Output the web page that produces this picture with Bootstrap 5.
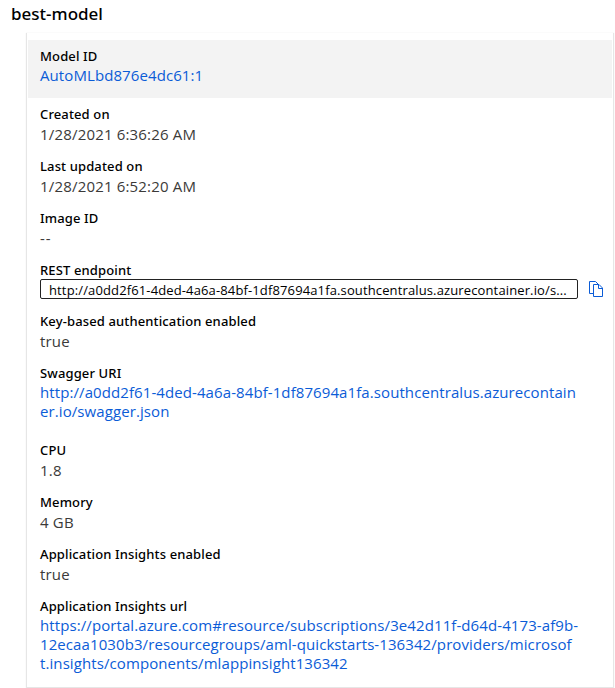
<!DOCTYPE html>
<html lang="en">
<head>
<meta charset="utf-8">
<meta name="viewport" content="width=device-width, initial-scale=1">
<title>best-model</title>
<link href="https://cdn.jsdelivr.net/npm/bootstrap@5.3.0/dist/css/bootstrap.min.css" rel="stylesheet">
<style>
body { font-family: "Open Sans", "Noto Sans", sans-serif; color: #3b3a39; height: 688px; overflow: hidden; }
.page-title { font-family: "Noto Sans", sans-serif; font-size: 17px; line-height: 24px; font-weight: 500; color: #000; padding: 2px 0 0 11px; height: 33px; }
.details { margin: 0 1px 0 26px; height: 655px; padding-top: 7px; border: solid #e6e6e6; border-width: 0 1px 1px; box-shadow: 0 0 1px #e4e4e4; }
.prop { height: 52px; padding: 6px 13px 0; }
.prop dt { font-family: "Noto Sans", sans-serif; font-size: 13px; line-height: 20px; font-weight: 500; letter-spacing: .13px; color: #000; }
.prop dd { font-size: 15px; line-height: 20px; letter-spacing: .18px; white-space: nowrap; margin: 0; }
.prop a { color: #0b5cd7; text-decoration: none; letter-spacing: .09px; }
.prop-active { height: 58px; background: #f3f3f3; margin-left: 1px; padding-left: 12px; margin-right: 1px; }
.prop-active dd { line-height: 18px; }
.prop .empty-value { letter-spacing: 1px; }
.prop-endpoint { height: 51px; padding-right: 9px; }
.prop-endpoint .d-flex { margin-top: -1px; }
.endpoint-box { width: 538px; height: 20px; border: 1px solid #222; border-radius: 2px; padding: 0 8px; font-size: 13px; line-height: 20px; letter-spacing: .13px; color: #000; }
.prop-swagger { height: 77px; }
.prop .multi { line-height: 19px; }
.copy-btn { margin-left: 11px; width: 14px; height: 16px; color: #0b5cd7; line-height: 0; }
</style>
</head>
<body class="bg-white">
<h1 class="page-title m-0">best-model</h1>
<dl class="details mb-0">
  <div class="prop prop-active"><dt>Model ID</dt><dd><a href="#">AutoMLbd876e4dc61:1</a></dd></div>
  <div class="prop"><dt>Created on</dt><dd>1/28/2021 6:36:26 AM</dd></div>
  <div class="prop"><dt>Last updated on</dt><dd>1/28/2021 6:52:20 AM</dd></div>
  <div class="prop"><dt>Image ID</dt><dd class="empty-value">--</dd></div>
  <div class="prop prop-endpoint"><dt>REST endpoint</dt>
    <dd class="d-flex align-items-center">
      <div class="endpoint-box">http://a0dd2f61-4ded-4a6a-84bf-1df87694a1fa.southcentralus.azurecontainer.io/s...</div>
      <button type="button" class="copy-btn btn p-0 border-0 rounded-0" aria-label="Copy">
        <svg width="14" height="16" viewBox="0 0 14 16" fill="none" stroke="currentColor"><path d="M4.500 12.500h-4V.5h6l3 3M4.500 3.500h5.500l3.500 3.500v8.500h-9zM9.500 3.500v4h4"/></svg>
      </button>
    </dd></div>
  <div class="prop"><dt>Key-based authentication enabled</dt><dd>true</dd></div>
  <div class="prop prop-swagger"><dt>Swagger URI</dt><dd class="multi"><a href="#">http://a0dd2f61-4ded-4a6a-84bf-1df87694a1fa.southcentralus.azurecontain<br>er.io/swagger.json</a></dd></div>
  <div class="prop"><dt>CPU</dt><dd>1.8</dd></div>
  <div class="prop"><dt>Memory</dt><dd>4 GB</dd></div>
  <div class="prop"><dt>Application Insights enabled</dt><dd>true</dd></div>
  <div class="prop"><dt>Application Insights url</dt><dd class="multi"><a href="#">https://portal.azure.com#resource/subscriptions/3e42d11f-d64d-4173-af9b-<br>12ecaa1030b3/resourcegroups/aml-quickstarts-136342/providers/microsof<br>t.insights/components/mlappinsight136342</a></dd></div>
</dl>
<script src="https://cdn.jsdelivr.net/npm/bootstrap@5.3.0/dist/js/bootstrap.bundle.min.js"></script>
</body>
</html>
